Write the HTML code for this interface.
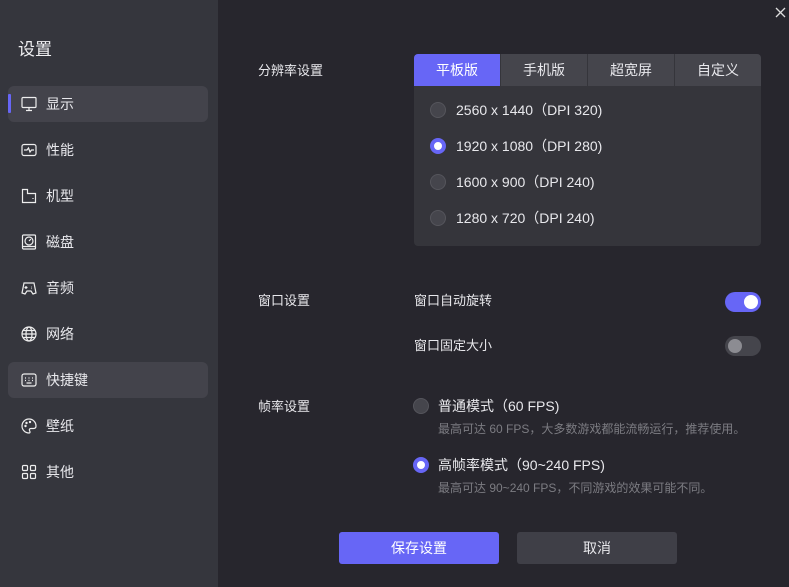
<!DOCTYPE html>
<html><head><meta charset="utf-8"><style>
*{margin:0;padding:0;box-sizing:border-box}
body{width:789px;height:587px;background:#27262d;font-family:"Liberation Sans","Noto Sans CJK SC",sans-serif;color:#e8e8ec;position:relative;overflow:hidden}
.side{position:absolute;left:0;top:0;width:218px;height:587px;background:#35363d}
.title{position:absolute;left:18px;top:35px;font-size:17px;color:#f0f0f2}
.item{position:absolute;left:8px;width:200px;height:36px;border-radius:6px;font-size:14px}
.item.act{background:#43434b}
.item .bar{position:absolute;left:0;top:8px;width:3px;height:19px;background:#6766f6;border-radius:1px}
.item svg{position:absolute;left:13px;top:10px}
.item span{position:absolute;left:38px;top:8px;line-height:20px}
.lbl{position:absolute;left:258px;font-size:13px;line-height:18px}
.box{position:absolute;left:414px;top:54px;width:347px;height:192px;background:#35353b;border-radius:4px;overflow:hidden}
.tab{position:absolute;top:0;height:32px;background:#45454c;font-size:14px;text-align:center;line-height:32px}
.r{position:absolute;width:16px;height:16px;border-radius:50%;background:#45454c;border:1px solid #55555c}
.r.on{background:#fff;border:4px solid #6766f6}
.rt{position:absolute;font-size:14px;line-height:18px}
.desc{position:absolute;left:438px;font-size:12px;color:#7c7c82;line-height:16px}
.tg{position:absolute;left:725px;width:36px;height:20px;border-radius:10px}
.tg i{position:absolute;top:3px;width:14px;height:14px;border-radius:50%}
.btn{position:absolute;top:532px;width:160px;height:32px;border-radius:3px;font-size:14px;text-align:center;line-height:32px}
</style></head><body>
<div class="side">
<div class="title">设置</div>
<div class="item act" style="top:86px"><div class="bar"></div>
<svg width="16" height="16" viewBox="0 0 16 16" fill="none" stroke="#eee" stroke-width="1.2"><rect x="1" y="1.5" width="14" height="10" rx="1"/><path d="M8 11.5v3M5 14.5h6"/></svg><span>显示</span></div>
<div class="item" style="top:132px"><svg width="16" height="16" viewBox="0 0 16 16" fill="none" stroke="#eee" stroke-width="1.2"><rect x="1" y="2.5" width="14" height="11" rx="2"/><path d="M3 8h3l1.5-2 1.5 4 1.5-2h2.5"/></svg><span>性能</span></div>
<div class="item" style="top:178px"><svg width="16" height="16" viewBox="0 0 16 16" fill="none" stroke="#eee" stroke-width="1.2"><path d="M1.5 14.5v-13h5v4h8v9z"/><path d="M12 10v1"/></svg><span>机型</span></div>
<div class="item" style="top:224px"><svg width="16" height="16" viewBox="0 0 16 16" fill="none" stroke="#eee" stroke-width="1.2"><rect x="1.5" y="1" width="13" height="14" rx="1"/><circle cx="8" cy="7" r="4"/><path d="M8 7l2-2M1.5 12.5h13"/></svg><span>磁盘</span></div>
<div class="item" style="top:270px"><svg width="16" height="16" viewBox="0 0 16 16" fill="none" stroke="#eee" stroke-width="1.2"><path d="M3 3h10l2 10-3 1-2-3H6l-2 3-3-1z"/><path d="M5 6v3M3.5 7.5h3M10.5 7h.5M10.5 8.5h.5"/></svg><span>音频</span></div>
<div class="item" style="top:316px"><svg width="16" height="16" viewBox="0 0 16 16" fill="none" stroke="#eee" stroke-width="1.2"><circle cx="8" cy="8" r="7"/><ellipse cx="8" cy="8" rx="3" ry="7"/><path d="M1 8h14M2 4.5h12M2 11.5h12"/></svg><span>网络</span></div>
<div class="item act" style="top:362px"><svg width="16" height="16" viewBox="0 0 16 16" fill="none" stroke="#eee" stroke-width="1.2"><rect x="1" y="2" width="14" height="12" rx="2"/><path d="M4 6h1M7.5 6h1M11 6h1M4 8.5h1M7.5 8.5h1M11 8.5h1M5.5 11h5"/></svg><span>快捷键</span></div>
<div class="item" style="top:408px"><svg width="16" height="16" viewBox="0 0 16 16" fill="none" stroke="#eee" stroke-width="1.2"><path d="M8 1a7 7 0 1 0 0 14c1.5 0 1-1.5.5-2.5s0-2 1.5-2h2.5c1.5 0 2.5-1 2.5-2.5A7 7 0 0 0 8 1z"/><circle cx="4.5" cy="8" r=".6"/><circle cx="5.5" cy="5" r=".6"/><circle cx="9" cy="4" r=".6"/></svg><span>壁纸</span></div>
<div class="item" style="top:454px"><svg width="16" height="16" viewBox="0 0 16 16" fill="none" stroke="#eee" stroke-width="1.2"><rect x="1.5" y="1.5" width="5" height="5" rx="1"/><rect x="9.5" y="1.5" width="5" height="5" rx="1"/><rect x="1.5" y="9.5" width="5" height="5" rx="1"/><rect x="9.5" y="9.5" width="5" height="5" rx="1"/></svg><span>其他</span></div>
</div>
<svg style="position:absolute;left:775px;top:7px" width="11" height="11" viewBox="0 0 11 11" stroke="#ddd" stroke-width="1.3"><path d="M1 1l9 9M10 1l-9 9"/></svg>

<div class="lbl" style="top:62px">分辨率设置</div>
<div class="box">
<div class="tab" style="left:0;width:86px;background:#6766f6;color:#fff">平板版</div>
<div class="tab" style="left:87px;width:86px">手机版</div>
<div class="tab" style="left:174px;width:86px">超宽屏</div>
<div class="tab" style="left:261px;width:86px">自定义</div>
</div>
<div class="r" style="left:430px;top:102px"></div><div class="rt" style="left:456px;top:101px">2560 x 1440（DPI 320)</div>
<div class="r on" style="left:430px;top:138px"></div><div class="rt" style="left:456px;top:137px">1920 x 1080（DPI 280)</div>
<div class="r" style="left:430px;top:174px"></div><div class="rt" style="left:456px;top:173px">1600 x 900（DPI 240)</div>
<div class="r" style="left:430px;top:210px"></div><div class="rt" style="left:456px;top:209px">1280 x 720（DPI 240)</div>

<div class="lbl" style="top:292px">窗口设置</div>
<div class="rt" style="left:414px;top:292px;font-size:13px">窗口自动旋转</div>
<div class="tg" style="top:292px;background:#6766f6"><i style="left:19px;background:#fff"></i></div>
<div class="rt" style="left:414px;top:337px;font-size:13px">窗口固定大小</div>
<div class="tg" style="top:336px;background:#45454c"><i style="left:3px;background:#8c8c92"></i></div>

<div class="lbl" style="top:398px">帧率设置</div>
<div class="r" style="left:413px;top:398px"></div><div class="rt" style="left:438px;top:397px">普通模式（60 FPS)</div>
<div class="desc" style="top:421px">最高可达 60 FPS，大多数游戏都能流畅运行，推荐使用。</div>
<div class="r on" style="left:413px;top:457px"></div><div class="rt" style="left:438px;top:456px">高帧率模式（90~240 FPS)</div>
<div class="desc" style="top:480px">最高可达 90~240 FPS，不同游戏的效果可能不同。</div>

<div class="btn" style="left:339px;background:#6766f6;color:#fff">保存设置</div>
<div class="btn" style="left:517px;background:#3f3f47">取消</div>
</body></html>
